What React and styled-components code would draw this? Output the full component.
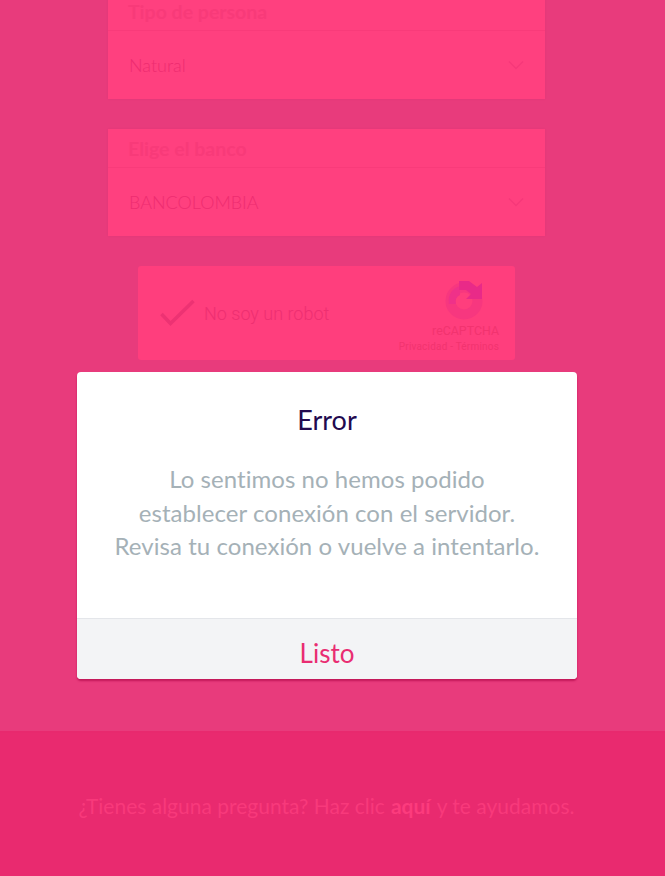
import React from 'react'
import styled, { createGlobalStyle } from 'styled-components'

const GlobalStyle = createGlobalStyle`
  html, body {
    margin: 0;
    padding: 0;
    background: #e83b7c;
    font-family: Lato, "Open Sans", sans-serif;
  }
`

const Page = styled.div`
  position: relative;
  width: 665px;
  height: 876px;
  overflow: hidden;
  display: flex;
  flex-direction: column;
  background: #e83b7c;
`

const Form = styled.div`
  height: 739px;
  margin-top: -8px;
  padding-right: 12px;
  box-sizing: border-box;
  display: flex;
  flex-direction: column;
  align-items: center;
  gap: 30px;
  flex-shrink: 0;
`

const SelectCard = styled.div`
  width: 437px;
  background: #ff407f;
  box-shadow: 0 0 2px rgba(200, 30, 90, 0.12);
`

const SelectLabel = styled.div`
  height: 39px;
  box-sizing: border-box;
  padding-left: 20px;
  display: flex;
  align-items: center;
  font-size: 19.5px;
  font-weight: 700;
  color: #f83a79;
  border-bottom: 1px solid #f93b7a;
`

const SelectValue = styled.div`
  height: 68px;
  padding: 0 21px;
  display: flex;
  align-items: center;
  justify-content: space-between;
  font-size: 18px;
  font-weight: 300;
  color: #ee2c70;
`

const Chevron = styled.svg`
  width: 16px;
  height: 10px;
  fill: none;
  stroke: #f6387a;
  stroke-width: 1.5;
`

const Captcha = styled.div`
  width: 377px;
  height: 94px;
  box-sizing: border-box;
  padding: 0 16px 0 22px;
  display: flex;
  align-items: center;
  justify-content: space-between;
  background: #ff3e7d;
  border-radius: 3px;
`

const CaptchaLeft = styled.div`
  display: flex;
  align-items: center;
  gap: 9px;
  font-family: Roboto, sans-serif;
  font-size: 18px;
  font-weight: 300;
  color: #ee2f71;
`

const CheckIcon = styled.svg`
  width: 35px;
  height: 28px;
  fill: none;
  stroke: #ed3273;
  stroke-width: 3.5;
`

const CaptchaBrand = styled.div`
  display: flex;
  flex-direction: column;
  align-items: flex-end;
  padding-top: 7px;
  font-family: Roboto, sans-serif;
  color: #f2336f;
`

const CaptchaLogo = styled.svg`
  width: 40px;
  height: 40px;
  margin: 0 14px 4px 0;
`

const CaptchaName = styled.div`
  font-size: 12.4px;
  line-height: 14px;
  margin-bottom: 3px;
`

const CaptchaLinks = styled.div`
  font-size: 10px;
  line-height: 12px;
  letter-spacing: 0.2px;
`

const Footer = styled.div`
  flex: 1;
  display: flex;
  align-items: center;
  justify-content: center;
  padding: 1px 12px 0 0;
  background: #e92a6f;
  border-top: 2px solid #e8296e;
  font-size: 21px;
  color: #f8397b;

  b {
    font-weight: 700;
    margin: 0 6px;
    color: #fc3b7d;
  }
`

const Modal = styled.div`
  position: absolute;
  left: 77px;
  top: 372px;
  width: 500px;
  height: 307px;
  display: flex;
  flex-direction: column;
  background: #fff;
  border-radius: 4px;
  overflow: hidden;
  box-shadow: 0 2px 2px rgba(190, 20, 85, 0.9);
`

const ModalBody = styled.div`
  flex: 1;
  display: flex;
  flex-direction: column;
  align-items: center;
  padding-top: 32px;
`

const ModalTitle = styled.div`
  font-size: 27px;
  line-height: 32px;
  color: #22094f;
`

const ModalText = styled.div`
  margin-top: 26px;
  font-size: 24px;
  line-height: 33.5px;
  letter-spacing: 0.05px;
  text-align: center;
  color: #a5b1b7;
`

const ModalButton = styled.div`
  height: 61px;
  box-sizing: border-box;
  padding-top: 7px;
  display: flex;
  align-items: center;
  justify-content: center;
  background: #f3f4f6;
  border-top: 1px solid #e4e6ea;
  font-size: 26px;
  color: #e92d72;
`

function Select({ label, value }) {
  return (
    <SelectCard>
      <SelectLabel>{label}</SelectLabel>
      <SelectValue>
        {value}
        <Chevron viewBox="0 0 16 10"><path d="M1 1.5l7 7 7-7" /></Chevron>
      </SelectValue>
    </SelectCard>
  )
}

export default function App() {
  return (
    <Page>
      <GlobalStyle />
      <Form>
        <Select label="Tipo de persona" value="Natural" />
        <Select label="Elige el banco" value="BANCOLOMBIA" />
        <Captcha>
          <CaptchaLeft>
            <CheckIcon viewBox="0 0 35 28"><path d="M1.5 15l9 9.5L33.5 2" /></CheckIcon>
            No soy un robot
          </CaptchaLeft>
          <CaptchaBrand>
            <CaptchaLogo viewBox="0 0 40 40">
              <circle cx="19" cy="21" r="13.5" fill="none" stroke="#f7377f" strokeWidth="10" />
              <path d="M4 24a15 15 0 0 1 11-18v9a7 7 0 0 0-4 9z" fill="#ef3189" />
              <path d="M14 1h10l8 6 5-4v16H21l5-5-5-4h-7z" fill="#e92a88" />
            </CaptchaLogo>
            <CaptchaName>reCAPTCHA</CaptchaName>
            <CaptchaLinks>Privacidad - Términos</CaptchaLinks>
          </CaptchaBrand>
        </Captcha>
      </Form>
      <Footer>
        ¿Tienes alguna pregunta? Haz clic <b>aquí</b> y te ayudamos.
      </Footer>
      <Modal>
        <ModalBody>
          <ModalTitle>Error</ModalTitle>
          <ModalText>
            Lo sentimos no hemos podido<br />
            establecer conexión con el servidor.<br />
            Revisa tu conexión o vuelve a intentarlo.
          </ModalText>
        </ModalBody>
        <ModalButton>Listo</ModalButton>
      </Modal>
    </Page>
  )
}
